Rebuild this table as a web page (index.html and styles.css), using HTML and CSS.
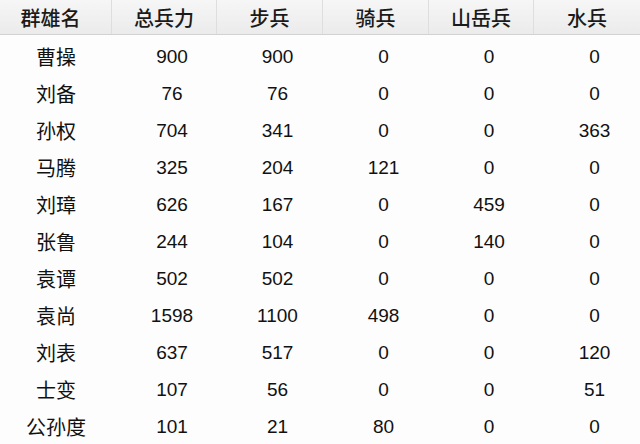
FILE: index.html
```html
<!DOCTYPE html>
<html lang="zh">
<head>
<meta charset="utf-8">
<title>群雄兵力</title>
<link rel="stylesheet" href="styles.css">
</head>
<body>
<div class="table">
  <div class="row head">
    <div class="cell c1">群雄名</div>
    <div class="cell">总兵力</div>
    <div class="cell">步兵</div>
    <div class="cell">骑兵</div>
    <div class="cell">山岳兵</div>
    <div class="cell">水兵</div>
  </div>
  <div class="row"><div class="cell name">曹操</div><div class="cell num">900</div><div class="cell num">900</div><div class="cell num">0</div><div class="cell num">0</div><div class="cell num">0</div></div>
  <div class="row"><div class="cell name">刘备</div><div class="cell num">76</div><div class="cell num">76</div><div class="cell num">0</div><div class="cell num">0</div><div class="cell num">0</div></div>
  <div class="row"><div class="cell name">孙权</div><div class="cell num">704</div><div class="cell num">341</div><div class="cell num">0</div><div class="cell num">0</div><div class="cell num">363</div></div>
  <div class="row"><div class="cell name">马腾</div><div class="cell num">325</div><div class="cell num">204</div><div class="cell num">121</div><div class="cell num">0</div><div class="cell num">0</div></div>
  <div class="row"><div class="cell name">刘璋</div><div class="cell num">626</div><div class="cell num">167</div><div class="cell num">0</div><div class="cell num">459</div><div class="cell num">0</div></div>
  <div class="row"><div class="cell name">张鲁</div><div class="cell num">244</div><div class="cell num">104</div><div class="cell num">0</div><div class="cell num">140</div><div class="cell num">0</div></div>
  <div class="row"><div class="cell name">袁谭</div><div class="cell num">502</div><div class="cell num">502</div><div class="cell num">0</div><div class="cell num">0</div><div class="cell num">0</div></div>
  <div class="row"><div class="cell name">袁尚</div><div class="cell num">1598</div><div class="cell num">1100</div><div class="cell num">498</div><div class="cell num">0</div><div class="cell num">0</div></div>
  <div class="row"><div class="cell name">刘表</div><div class="cell num">637</div><div class="cell num">517</div><div class="cell num">0</div><div class="cell num">0</div><div class="cell num">120</div></div>
  <div class="row"><div class="cell name">士变</div><div class="cell num">107</div><div class="cell num">56</div><div class="cell num">0</div><div class="cell num">0</div><div class="cell num">51</div></div>
  <div class="row"><div class="cell name">公孙度</div><div class="cell num">101</div><div class="cell num">21</div><div class="cell num">80</div><div class="cell num">0</div><div class="cell num">0</div></div>
</div>
</body>
</html>
```

FILE: styles.css
```css
html, body {
  margin: 0;
  padding: 0;
  background: #fdfdfd;
}
.table {
  width: 640px;
  height: 444px;
  overflow: hidden;
  background: #fdfdfd;
  color: #111;
  font-family: "Noto Sans CJK SC", sans-serif;
}
.row {
  display: grid;
  grid-template-columns: 112px 105px 106px 106px 105px 106px;
  height: 37px;
}
.head {
  height: 34px;
  background: linear-gradient(#f6f6f6, #ebebeb);
  border-bottom: 1px solid #d2d2d2;
  margin-bottom: 2px;
}
.cell {
  display: flex;
  align-items: center;
  justify-content: center;
  font-size: 20px;
  line-height: 1;
}
.head .cell {
  border-right: 1px solid #dedede;
  color: #1a1a1a;
  font-weight: 500;
  padding-top: 1px;
}
.head .c1 {
  padding-right: 10px;
}
.head .cell:last-child {
  border-right: none;
}
.name {
  font-size: 20px;
  padding-top: 2px;
}
.num {
  font-family: "Liberation Sans", Arial, sans-serif;
  font-size: 19px;
  padding-left: 15px;
  padding-top: 2px;
}
```
